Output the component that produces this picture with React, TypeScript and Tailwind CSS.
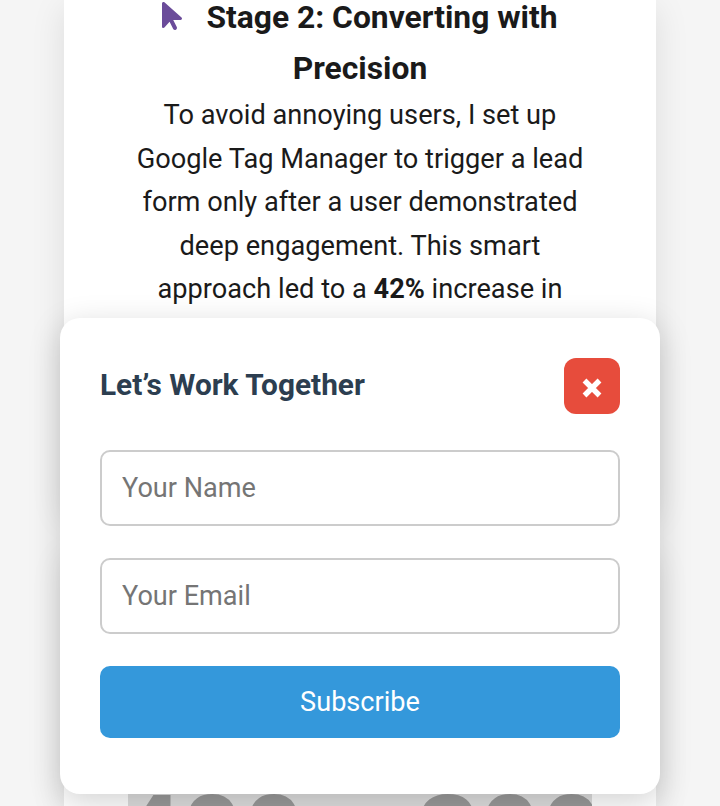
import React from "react";

export default function App() {
  return (
    <div className="relative flex h-[806px] w-[720px] flex-col items-center gap-10 overflow-hidden bg-[#f5f5f5] font-[Roboto,sans-serif] text-[#1a1a1a]">
      <article className="flex h-[510px] w-[592px] shrink-0 flex-col items-center bg-white shadow-[0_8px_32px_rgba(0,0,0,0.1)]">
        <div className="-mt-2 w-[464px] text-center">
          <h3 className="text-[31.8px] leading-[51.2px] font-bold">
            <svg viewBox="0 0 320 512" className="mr-6 inline-block h-8 w-5 align-[-4px]" fill="#6b4c9a">
              <path d="M0 55.2V426c0 12.2 9.9 22 22 22 6.3 0 12.4-2.7 16.6-7.5L121.2 346l58.1 116.3c7.9 15.8 27.1 22.2 42.9 14.3s22.2-27.1 14.3-42.9L179.8 320H297.9c12.2 0 22.1-9.9 22.1-22.1 0-6.3-2.7-12.3-7.4-16.5L38.6 37.9C34.3 34.1 28.9 32 23.2 32 10.4 32 0 42.4 0 55.2z" />
            </svg>
            Stage 2: Converting with Precision
          </h3>
          <p className="text-[27.2px] leading-[43.52px]">
            To avoid annoying users, I set up Google Tag Manager to trigger a lead form only after a user demonstrated deep engagement. This smart approach led to a <strong>42%</strong> increase in
          </p>
        </div>
      </article>
      <article className="flex h-[256px] w-[592px] shrink-0 flex-col items-center justify-end bg-white shadow-[0_8px_32px_rgba(0,0,0,0.1)]">
        <div className="flex h-3 w-[464px] items-start justify-center overflow-hidden bg-[#ddd]">
          <span className="-mt-[15px] shrink-0 pl-0.5 font-['Liberation_Sans',sans-serif] text-[111px] leading-none font-bold [word-spacing:-5.5px] whitespace-nowrap text-[#999]">400 x 300</span>
        </div>
      </article>
      <form className="absolute top-[318px] left-[60px] flex h-[476px] w-[600px] flex-col rounded-[20px] bg-white px-10 pt-10 shadow-[0_8px_32px_rgba(0,0,0,0.18)]">
        <div className="flex h-14 items-center justify-between">
          <h2 className="pb-0.5 text-[29.8px] font-bold text-[#2c3e50]">Let’s Work Together</h2>
          <button type="button" aria-label="Close" className="flex size-14 items-center justify-center rounded-xl bg-[#e74c3c]">
            <svg viewBox="0 0 20 20" className="mt-[3px] size-5" stroke="white" strokeWidth="5.4">
              <path d="M2.5 2.5 17.5 17.5M17.5 2.5 2.5 17.5" />
            </svg>
          </button>
        </div>
        <input placeholder="Your Name" className="mt-9 h-19 w-full rounded-[10px] border-2 border-[#ccc] px-5 text-[27.1px] placeholder:text-[#757575]" />
        <input placeholder="Your Email" className="mt-8 h-19 w-full rounded-[10px] border-2 border-[#ccc] px-5 text-[27.1px] placeholder:text-[#757575]" />
        <button type="button" className="mt-8 h-18 w-full rounded-[10px] bg-[#3498db] text-[27.1px] text-white">Subscribe</button>
      </form>
    </div>
  );
}
